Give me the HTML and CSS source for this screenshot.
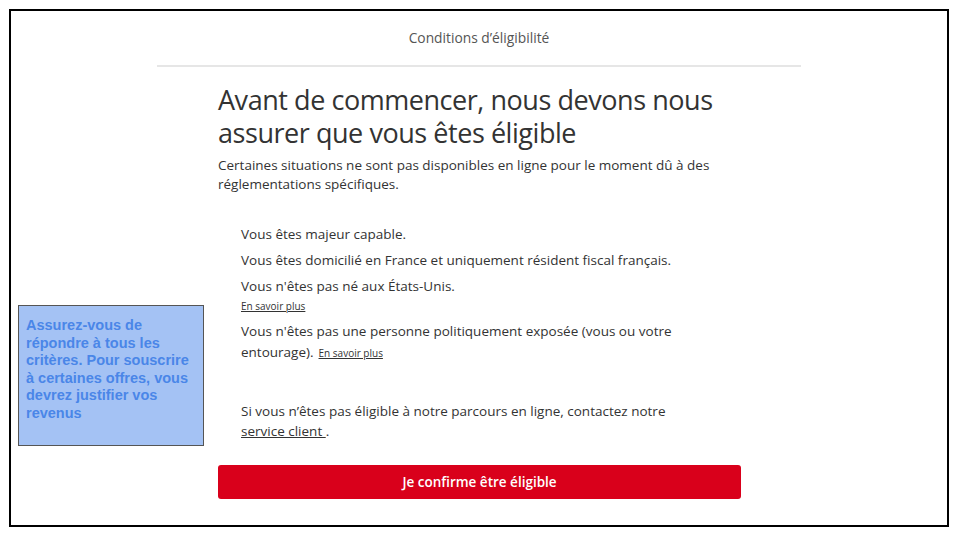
FILE: index.html
```html
<!DOCTYPE html>
<html lang="fr">
<head>
    <meta charset="UTF-8">
    <meta name="viewport" content="width=device-width, initial-scale=1.0">
    <title>Conditions d'éligibilité</title>
    <link rel="stylesheet" href="styles.css">
</head>
<body>

<div class="slide">
    <div class="card">
        <div class="card-header">Conditions d’éligibilité</div>
        <div class="card-body">
            <h1 class="title">Avant de commencer, nous devons nous assurer que vous êtes éligible</h1>
            <p class="intro">Certaines situations ne sont pas disponibles en ligne pour le moment dû à des réglementations spécifiques.</p>

            <ul class="criteria">
                <li>Vous êtes majeur capable.</li>
                <li>Vous êtes domicilié en France et uniquement résident fiscal français.</li>
                <li>Vous n'êtes pas né aux États-Unis.
                    <a href="#" class="more block">En savoir plus</a>
                </li>
                <li>Vous n'êtes pas une personne politiquement exposée (vous ou votre entourage).<a href="#" class="more inline">En savoir plus</a></li>
            </ul>

            <p class="contact">Si vous n’êtes pas éligible à notre parcours en ligne, contactez notre <a href="#">service client </a>.</p>

            <button class="confirm">Je confirme être éligible</button>
        </div>
    </div>

    <div class="note">Assurez-vous de répondre à tous les critères. Pour souscrire à certaines offres, vous devrez justifier vos revenus</div>
</div>

</body>
</html>
```

FILE: styles.css
```css
body {
    margin: 0;
    padding: 9px;
    background: #fff;
    font-family: "Open Sans", "Noto Sans", sans-serif;
    color: #333;
}

.slide {
    position: relative;
    width: 936px;
    height: 514px;
    border: 2px solid #000;
}

.card {
    width: 644px;
    margin: 0 auto;
}

.card-header {
    height: 54px;
    line-height: 54px;
    text-align: center;
    font-size: 13.8px;
    color: #555;
    border-bottom: 2px solid #e6e6e6;
}

.card-body {
    padding: 16px 60px 0 61px;
}

.title {
    margin: 0;
    font-size: 27px;
    font-weight: 400;
    line-height: 33px;
    letter-spacing: -0.45px;
    color: #333;
}

.intro {
    margin: 7px 0 0;
    font-size: 13.5px;
    line-height: 19px;
}

.criteria {
    list-style: none;
    margin: 30px 0 0;
    padding-left: 23px;
    font-size: 13.5px;
    line-height: 21px;
}

.criteria li {
    margin-bottom: 5px;
}

.more {
    font-size: 10px;
    line-height: 1;
    color: #333;
}

.more.inline {
    margin-left: 5px;
}

.more.block {
    display: block;
    line-height: 19px;
}

.contact {
    width: 450px;
    margin: 38px 0 0 23px;
    font-size: 13.5px;
    line-height: 20px;
}

.contact a {
    color: #333;
}

.confirm {
    display: block;
    width: 523px;
    height: 34px;
    margin-top: 24px;
    border: none;
    border-radius: 3px;
    background-color: #d9001b;
    color: #fff;
    font-family: inherit;
    font-size: 13.5px;
    font-weight: 600;
    cursor: pointer;
}

.note {
    position: absolute;
    left: 7px;
    top: 294px;
    width: 171px;
    height: 124px;
    padding: 11px 6px 4px 7px;
    background-color: #a4c2f4;
    border: 1px solid #555;
    font-family: "Liberation Sans", Arial, sans-serif;
    font-size: 14.5px;
    font-weight: 700;
    line-height: 17.6px;
    color: #4a86e8;
}
```
